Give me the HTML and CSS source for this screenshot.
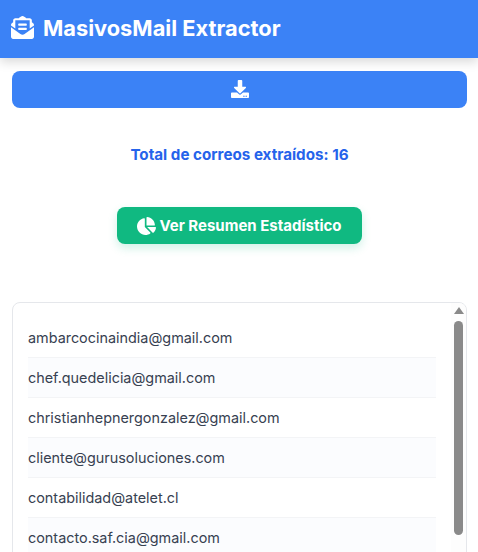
FILE: index.html
```html
<!DOCTYPE html>
<html lang="es">
<head>
<meta charset="UTF-8">
<meta name="viewport" content="width=device-width, initial-scale=1.0">
<title>MasivosMail Extractor</title>
<link rel="stylesheet" href="styles.css">
</head>
<body>

<header class="app-header">
    <svg class="app-logo" viewBox="0 0 512 512"><path d="M176 216h160c8.84 0 16-7.16 16-16v-16c0-8.84-7.16-16-16-16H176c-8.84 0-16 7.16-16 16v16c0 8.84 7.16 16 16 16zm-16 80c0 8.84 7.16 16 16 16h160c8.84 0 16-7.16 16-16v-16c0-8.84-7.16-16-16-16H176c-8.84 0-16 7.16-16 16v16zm96 121.13c-16.42 0-32.84-5.06-46.86-15.19L0 250.86V464c0 26.51 21.49 48 48 48h416c26.51 0 48-21.49 48-48V250.86L302.86 401.94c-14.02 10.12-30.44 15.19-46.86 15.19zm237.61-254.18c-8.85-6.94-17.24-13.47-29.61-22.81V96c0-26.51-21.49-48-48-48h-77.55c-3.04-2.2-5.87-4.26-9.04-6.56C312.6 29.17 279.2-.35 256 0c-23.2-.35-56.59 29.17-73.41 41.44-3.17 2.3-6 4.36-9.04 6.56H96c-26.51 0-48 21.49-48 48v44.14c-12.37 9.33-20.76 15.87-29.61 22.81A47.995 47.995 0 0 0 0 200.72v10.65l96 69.35V96h320v184.72l96-69.35v-10.65c0-14.74-6.78-28.67-18.39-37.77z"/></svg>
    <h1>MasivosMail Extractor</h1>
</header>

<main class="content">
    <button class="download-btn" type="button">
        <svg class="download-icon" viewBox="0 0 512 512"><path d="M216 0h80c13.3 0 24 10.7 24 24v168h87.7c17.8 0 26.7 21.5 14.1 34.1L269.7 378.3c-7.5 7.5-19.8 7.5-27.3 0L90.1 226.1c-12.6-12.6-3.7-34.1 14.1-34.1H192V24c0-13.3 10.7-24 24-24zm296 376v112c0 13.3-10.7 24-24 24H24c-13.3 0-24-10.7-24-24V376c0-13.3 10.7-24 24-24h146.7l49 49c20.1 20.1 52.5 20.1 72.6 0l49-49H488c13.3 0 24 10.7 24 24zm-124 88c0-11-9-20-20-20s-20 9-20 20 9 20 20 20 20-9 20-20zm64 0c0-11-9-20-20-20s-20 9-20 20 9 20 20 20 20-9 20-20z"/></svg>
    </button>

    <p class="total">Total de correos extraídos: 16</p>

    <button class="stats-btn" type="button">
        <svg class="stats-icon" viewBox="0 0 544 512"><path d="M527.79 288H290.5l158.03 158.03c6.04 6.04 15.98 6.53 22.19.68 38.7-36.46 65.32-85.61 73.13-140.86 1.34-9.46-6.51-17.85-16.06-17.85zm-15.83-64.8C503.72 103.74 408.26 8.28 288.8.04 279.68-.59 272 7.1 272 16.24V240h223.77c9.14 0 16.82-7.68 16.19-16.8zM224 288V50.71c0-9.55-8.39-17.4-17.84-16.06C86.99 51.49-4.1 155.6.14 280.37 4.5 408.51 114.83 513.59 243.03 511.98c50.4-.63 96.97-16.87 135.26-44.03 7.9-5.6 8.42-17.23 1.57-24.08L224 288z"/></svg>
        Ver Resumen Estadístico
    </button>

    <div class="email-box">
        <ul class="email-list">
            <li>ambarcocinaindia@gmail.com</li>
            <li>chef.quedelicia@gmail.com</li>
            <li>christianhepnergonzalez@gmail.com</li>
            <li>cliente@gurusoluciones.com</li>
            <li>contabilidad@atelet.cl</li>
            <li>contacto.saf.cia@gmail.com</li>
        </ul>
        <!-- scrollbar sits on top of the box edge -->
        <div class="scrollbar">
            <span class="scroll-arrow"></span>
            <span class="scroll-thumb"></span>
        </div>
    </div>
</main>

</body>
</html>
```

FILE: styles.css
```css
html, body {
    height: 552px;
    overflow: hidden;
}
body {
    font-family: Inter, "Liberation Sans", sans-serif;
    margin: 0;
    padding: 0;
    background-color: #fff;
    color: #1f2937;
}
.app-header {
    position: relative;
    display: flex;
    align-items: center;
    gap: 9px;
    height: 58px;
    padding: 0 0 3px 11px;
    box-sizing: border-box;
    background-color: #3b82f6;
    color: #fff;
    box-shadow: 0 4px 10px rgba(0, 0, 0, 0.15);
}
.app-header h1 {
    margin: 0;
    font-size: 21.8px;
    font-weight: 700;
}
.app-logo {
    width: 23px;
    height: 23px;
    fill: #fff;
}
.content {
    display: flex;
    flex-direction: column;
    align-items: center;
    box-sizing: border-box;
    height: 494px;
    padding: 13px 11px 0 12px;
    overflow: hidden;
}
.download-btn {
    display: flex;
    flex-shrink: 0;
    justify-content: center;
    align-items: center;
    width: 100%;
    height: 37px;
    padding: 0 0 2px;
    border: none;
    border-radius: 8px;
    background-color: #3b82f6;
}
.download-icon {
    width: 18px;
    height: 18px;
    fill: #fff;
}
.total {
    margin: 37px 0 0;
    font-size: 15.2px;
    line-height: 20px;
    font-weight: 700;
    color: #2563eb;
}
.stats-btn {
    display: flex;
    flex-shrink: 0;
    align-items: center;
    justify-content: center;
    gap: 3px;
    width: 245px;
    height: 37px;
    margin-top: 42px;
    padding: 0;
    border: none;
    border-radius: 8px;
    background-color: #10b981;
    color: #fff;
    font-family: inherit;
    font-size: 15px;
    font-weight: 700;
    box-shadow: 0 4px 10px rgba(16, 185, 129, 0.2);
}
.stats-icon {
    width: 19px;
    height: 18px;
    fill: #fff;
}
.email-box {
    position: relative;
    flex-shrink: 0;
    width: 100%;
    box-sizing: border-box;
    height: 300px;
    margin-top: 58px;
    padding: 15px 30px 15px 15px;
    border: 1px solid #e5e7eb;
    border-radius: 8px;
    overflow: hidden;
}
.email-list {
    margin: 0;
    padding: 0;
    list-style: none;
}
.email-list li {
    height: 39px;
    line-height: 39px;
    border-bottom: 1px solid #f3f4f6;
    font-size: 14.4px;
    color: #374151;
}
.email-list li:nth-child(even) {
    background-color: #fbfcfe;
}
.scrollbar {
    position: absolute;
    top: 0;
    right: 0;
    bottom: 0;
    width: 15px;
    background-color: #fdfdfd;
}
.scroll-arrow {
    position: absolute;
    top: 4px;
    left: 3px;
    width: 0;
    height: 0;
    border-left: 5px solid transparent;
    border-right: 5px solid transparent;
    border-bottom: 7px solid #8a8a8a;
}
.scroll-thumb {
    position: absolute;
    top: 18px;
    left: 3px;
    width: 9px;
    height: 214px;
    border-radius: 5px;
    background-color: #8a8a8a;
}
```
